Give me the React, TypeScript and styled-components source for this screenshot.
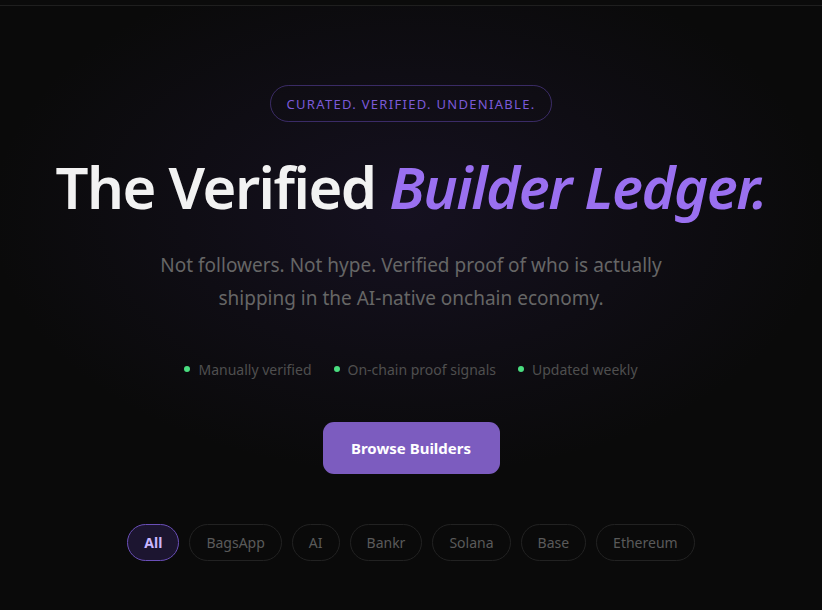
import React from "react";
import styled, { createGlobalStyle } from "styled-components";

const GlobalStyle = createGlobalStyle`
  html, body {
    margin: 0;
    padding: 0;
    background: #0a0a0a;
  }
  body {
    font-family: "Noto Sans", "Open Sans", sans-serif;
  }
`;

const Page = styled.div`
  width: 822px;
  height: 610px;
  overflow: hidden;
  background: radial-gradient(
      ellipse 420px 260px at 410px 215px,
      rgba(60, 40, 110, 0.22),
      rgba(10, 10, 10, 0) 100%
    ),
    #0a0a0a;
`;

const TopBar = styled.div`
  height: 5px;
  border-bottom: 1px solid #1f1f1f;
  background: #0b0b0b;
`;

const Hero = styled.section`
  display: flex;
  flex-direction: column;
  align-items: center;
  padding-top: 79px;
`;

const Badge = styled.div`
  height: 35px;
  padding: 0 16px;
  display: flex;
  align-items: center;
  border: 1px solid rgba(110, 80, 200, 0.45);
  border-radius: 999px;
  font-size: 13px;
  letter-spacing: 1.3px;
  color: #7b5ad8;
`;

const Title = styled.h1`
  margin: 30px 0 0;
  font-size: 58px;
  line-height: 1.2;
  font-weight: 600;
  color: #f2f2f2;
  letter-spacing: -1.5px;
  white-space: nowrap;
`;

const Accent = styled.em`
  color: #9a70f0;
  font-style: italic;
`;

const Lead = styled.p`
  margin: 27px 0 0;
  max-width: 520px;
  text-align: center;
  font-size: 19px;
  line-height: 33px;
  color: #666;
`;

const Points = styled.ul`
  list-style: none;
  margin: 45px 0 0;
  padding: 0;
  display: flex;
  gap: 22px;
`;

const Point = styled.li`
  display: flex;
  align-items: center;
  gap: 8px;
  font-size: 14px;
  color: #4f4f4f;

  &::before {
    content: "";
    width: 6px;
    height: 6px;
    border-radius: 50%;
    background: #4ade80;
  }
`;

const CTA = styled.button`
  margin-top: 43px;
  width: 177px;
  height: 52px;
  border: none;
  border-radius: 11px;
  background: #7c5cbf;
  color: #fff;
  font-family: inherit;
  font-size: 15px;
  font-weight: 700;
  cursor: pointer;
`;

const Chips = styled.div`
  margin-top: 50px;
  display: flex;
  gap: 10px;
`;

const Chip = styled.button<{ $active?: boolean }>`
  height: 37px;
  padding: 0 16px;
  border-radius: 999px;
  font-family: inherit;
  font-size: 14px;
  font-weight: ${({ $active }) => ($active ? 700 : 400)};
  background: ${({ $active }) => ($active ? "#1c1530" : "transparent")};
  border: 1px solid ${({ $active }) => ($active ? "#6a4fb8" : "#222")};
  color: ${({ $active }) => ($active ? "#c9b6ff" : "#5a5a5a")};
  cursor: pointer;
`;

const chips = ["All", "BagsApp", "AI", "Bankr", "Solana", "Base", "Ethereum"];

export default function App() {
  return (
    <Page>
      <GlobalStyle />
      <TopBar />
      <Hero>
        <Badge>CURATED. VERIFIED. UNDENIABLE.</Badge>
        <Title>
          The Verified <Accent>Builder Ledger.</Accent>
        </Title>
        <Lead>
          Not followers. Not hype. Verified proof of who is actually shipping
          in the AI-native onchain economy.
        </Lead>
        <Points>
          <Point>Manually verified</Point>
          <Point>On-chain proof signals</Point>
          <Point>Updated weekly</Point>
        </Points>
        <CTA>Browse Builders</CTA>
        <Chips>
          {chips.map((c, i) => (
            <Chip key={c} $active={i === 0}>
              {c}
            </Chip>
          ))}
        </Chips>
      </Hero>
    </Page>
  );
}
